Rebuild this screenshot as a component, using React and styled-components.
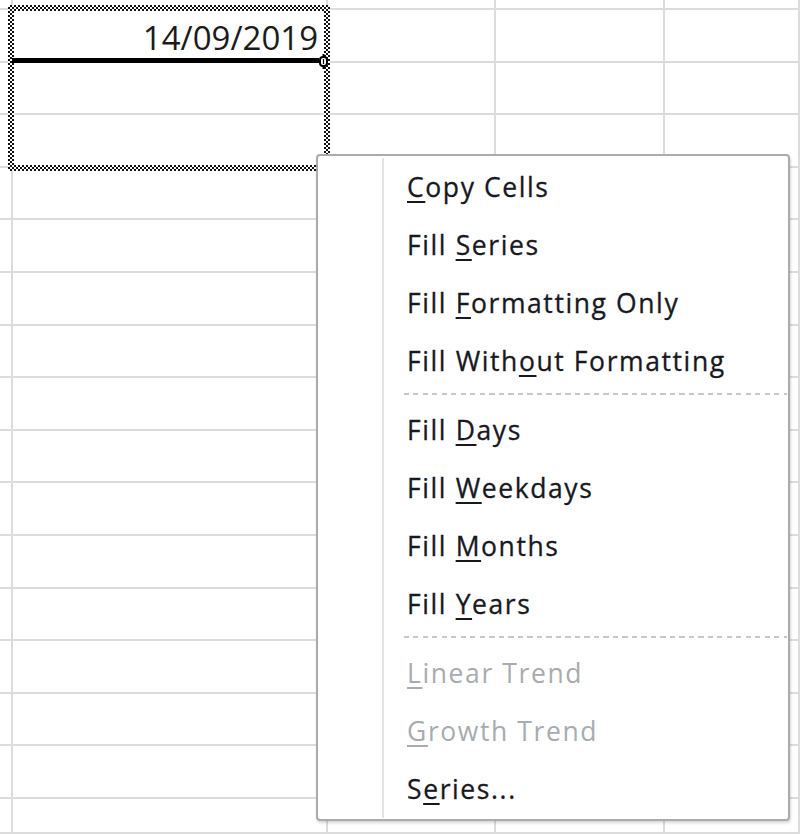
import React from 'react';
import styled, { createGlobalStyle } from 'styled-components';

const Global = createGlobalStyle`
  html, body { margin: 0; padding: 0; background: #fff; }
  body { font-family: "Open Sans", "Liberation Sans", sans-serif; }
`;

const Sheet = styled.div`
  position: relative;
  width: 800px;
  height: 834px;
  overflow: hidden;
  display: grid;
  grid-template-columns: 13px 315px 168px 169px 1fr;
  grid-template-rows: 10px repeat(15, 52.6px) 1fr;
  background: #fff;
`;

const Cell = styled.div`
  box-sizing: border-box;
  min-width: 0;
  border-right: 2px solid #dcdcdc;
  border-bottom: 2px solid #dcdcdc;
  display: flex;
  align-items: flex-end;
  justify-content: flex-end;
  padding: 0 8px 7px 0;
`;

const DateText = styled.span`
  display: block;
  font-family: "Open Sans", "Liberation Sans", sans-serif;
  font-size: 33px;
  line-height: 1;
  color: #1b1b1b;
  white-space: nowrap;
`;

const Marquee = styled.div`
  position: absolute;
  left: 8px;
  top: 5px;
  width: 322px;
  height: 166px;
  box-sizing: border-box;
  padding: 6px;
  background: repeating-conic-gradient(#111 0 25%, #fff 0 50%) 0 0 / 4px 4px;
  -webkit-mask: linear-gradient(#000 0 0) content-box, linear-gradient(#000 0 0);
  -webkit-mask-composite: xor;
  mask: linear-gradient(#000 0 0) content-box exclude, linear-gradient(#000 0 0);
  pointer-events: none;
`;

const ActiveEdge = styled.div`
  position: absolute;
  left: 12px;
  top: 58px;
  width: 307px;
  height: 5px;
  background: #000;
`;

const Handle = styled.svg`
  position: absolute;
  left: 318px;
  top: 53px;
`;

const Menu = styled.div`
  position: absolute;
  left: 316px;
  top: 154px;
  width: 474px;
  box-sizing: border-box;
  border: 2px solid #ababab;
  border-radius: 4px;
  background: #fff;
  box-shadow: 1px 2px 3px rgba(0, 0, 0, 0.16);
  display: flex;
  padding: 2px 0 1px;
`;

const Gutter = styled.div`
  flex: none;
  width: 64px;
  border-right: 2px solid #e4e4e4;
`;

const List = styled.div`
  flex: 1;
  display: flex;
  flex-direction: column;
`;

const Item = styled.div`
  height: 58px;
  display: flex;
  align-items: center;
  padding-left: 23px;
  font-size: 26.5px;
  font-weight: 400;
  letter-spacing: 1.6px;
  color: ${(p) => (p.$disabled ? '#a8abb0' : '#18181f')};
  white-space: nowrap;
  -webkit-text-stroke: ${(p) => (p.$disabled ? '0' : '0.3px')};
`;

const Label = styled.span`
  white-space: pre;
  u {
    text-decoration-thickness: 2px;
    text-underline-offset: 4px;
  }
`;

const Separator = styled.div`
  height: 11px;
  position: relative;
  &::after {
    content: '';
    position: absolute;
    left: 20px;
    right: 1px;
    top: 3px;
    height: 2px;
    background: repeating-linear-gradient(90deg, #c8c8c8 0 5px, transparent 5px 9.5px);
  }
`;

const items = [
  ['', 'C', 'opy Cells'],
  ['Fill ', 'S', 'eries'],
  ['Fill ', 'F', 'ormatting Only'],
  ['Fill With', 'o', 'ut Formatting'],
  'sep',
  ['Fill ', 'D', 'ays'],
  ['Fill ', 'W', 'eekdays'],
  ['Fill ', 'M', 'onths'],
  ['Fill ', 'Y', 'ears'],
  'sep',
  ['', 'L', 'inear Trend', true],
  ['', 'G', 'rowth Trend', true],
  ['S', 'e', 'ries...'],
];

export default function App() {
  const cells = [];
  for (let r = 0; r < 17; r++) {
    for (let c = 0; c < 5; c++) {
      cells.push(
        <Cell key={`${r}-${c}`}>
          {r === 1 && c === 1 ? <DateText>14/09/2019</DateText> : null}
        </Cell>
      );
    }
  }
  return (
    <>
      <Global />
      <Sheet>
        {cells}
        <Marquee />
        <ActiveEdge />
        <Handle width="11" height="17" viewBox="0 0 11 17">
          <path d="M5.5 1 L5.5 4 M5.5 13 L5.5 16" stroke="#000" strokeWidth="2" />
          <rect x="2" y="4" width="7" height="9" rx="3" fill="#fff" stroke="#000" strokeWidth="2" />
          <path d="M5.5 6 L5.5 11" stroke="#000" strokeWidth="1.2" />
        </Handle>
        <Menu>
          <Gutter />
          <List>
            {items.map((it, i) =>
              it === 'sep' ? (
                <Separator key={i} />
              ) : (
                <Item key={i} $disabled={it[3]}>
                  <Label>
                    {it[0]}
                    <u>{it[1]}</u>
                    {it[2]}
                  </Label>
                </Item>
              )
            )}
          </List>
        </Menu>
      </Sheet>
    </>
  );
}
